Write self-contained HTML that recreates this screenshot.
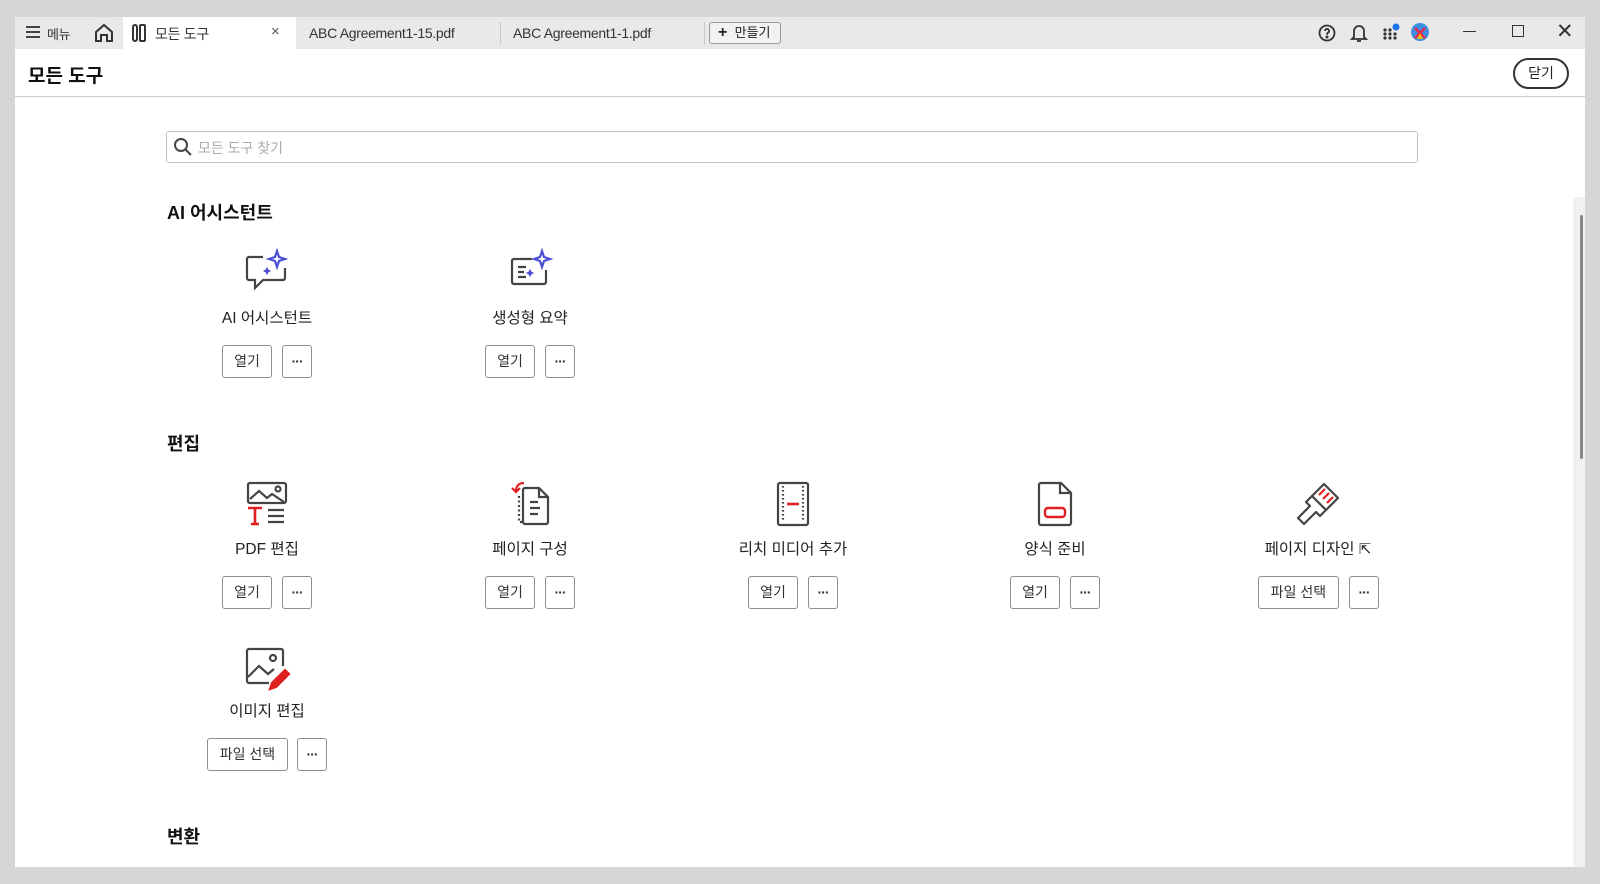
<!DOCTYPE html>
<html><head><meta charset="utf-8"><style>
*{box-sizing:border-box;margin:0;padding:0}
body{width:1600px;height:884px;background:#d6d6d6;font-family:"Liberation Sans","Noto Sans CJK KR",sans-serif;color:#222;position:relative;overflow:hidden}
.win{position:absolute;left:15px;top:17px;width:1570px;height:850px;background:#fff}
.tabbar{position:absolute;left:0;top:0;width:1570px;height:32px;background:#e9e9e9}
.a{position:absolute}
.t{font-size:14px;color:#333;white-space:nowrap;letter-spacing:-0.3px}
.hdr{position:absolute;left:0;top:32px;width:1570px;height:48px;border-bottom:1px solid #ccc;background:#fff}
.btn{position:absolute;height:33px;border:1px solid #8e8e8e;border-radius:3px;background:#fff;font-size:14px;text-align:center;line-height:31px;color:#333}
.lbl{position:absolute;font-size:15.5px;color:#222;white-space:nowrap;transform:translateX(-50%)}
.h{position:absolute;left:152px;font-size:18px;font-weight:bold;color:#111}
.ic{position:absolute;transform:translate(-50%,-50%)}
.d{font-weight:bold;letter-spacing:-1px}
</style></head><body>
<div class="win">
 <div class="tabbar">
  <div class="a" style="left:11px;top:9px;width:14px;height:12px;border-top:2px solid #444;border-bottom:2px solid #444"><div style="margin-top:3px;border-top:2px solid #444"></div></div>
  <div class="a t" style="left:32px;top:7px;font-size:13px">메뉴</div>
  <svg class="a" style="left:79px;top:6px" width="20" height="20" viewBox="0 0 20 20" fill="none" stroke="#333" stroke-width="2"><path d="M2 9L10 2L18 9V18H13V12H7V18H2Z"/></svg>
  <div class="a" style="left:108px;top:0;width:173px;height:32px;background:#fff"></div>
  <svg class="a" style="left:117px;top:7px" width="14" height="18" viewBox="0 0 14 18" fill="none" stroke="#333" stroke-width="2"><rect x="1" y="1" width="4" height="16" rx="2"/><rect x="8" y="1" width="5" height="16" rx="1"/></svg>
  <div class="a t" style="left:140px;top:7px">모든 도구</div>
  <div class="a t" style="left:256px;top:6px;font-size:15px;color:#555">×</div>
  <div class="a t" style="left:294px;top:8px">ABC Agreement1-15.pdf</div>
  <div class="a" style="left:485px;top:5px;width:1px;height:22px;background:#c8c8c8"></div>
  <div class="a t" style="left:498px;top:8px">ABC Agreement1-1.pdf</div>
  <div class="a" style="left:689px;top:5px;width:1px;height:22px;background:#c8c8c8"></div>
  <div class="a" style="left:694px;top:5px;width:72px;height:22px;border:1px solid #999;border-radius:3px;background:#f2f2f2;font-size:13px;line-height:20px;padding-left:8px"><b style="font-size:16px">+</b>&nbsp; 만들기</div>
  <svg class="a" style="left:1302px;top:6px" width="20" height="20" viewBox="0 0 20 20" fill="none" stroke="#333" stroke-width="1.8"><circle cx="10" cy="10" r="7.5"/><path d="M8 8a2 2 0 1 1 3 1.7c-1 .5-1 1-1 2"/><circle cx="10" cy="14" r=".6" fill="#333"/></svg>
  <svg class="a" style="left:1334px;top:5px" width="20" height="22" viewBox="0 0 20 22" fill="none" stroke="#333" stroke-width="1.8"><path d="M5 15V9a5 5 0 0 1 10 0v6l2 2H3z"/><path d="M8 19h4"/></svg>
  <svg class="a" style="left:1366px;top:5px" width="20" height="20" viewBox="0 0 20 20" fill="#333"><circle cx="4" cy="8" r="1.6"/><circle cx="9" cy="8" r="1.6"/><circle cx="4" cy="12" r="1.6"/><circle cx="9" cy="12" r="1.6"/><circle cx="14" cy="12" r="1.6"/><circle cx="4" cy="16" r="1.6"/><circle cx="9" cy="16" r="1.6"/><circle cx="14" cy="16" r="1.6"/><circle cx="15" cy="5" r="3.5" fill="#1a73e8"/></svg>
  <svg class="a" style="left:1395px;top:5px" width="20" height="20" viewBox="0 0 20 20"><circle cx="10" cy="10" r="9" fill="#3f8fe0"/><path d="M5 6L15 16M15 6L5 16" stroke="#e0284a" stroke-width="2.5"/><path d="M7 17L10 11L13 17Z" fill="#f5c000"/></svg>
  <div class="a" style="left:1448px;top:14px;width:13px;height:1px;background:#333"></div>
  <div class="a" style="left:1497px;top:8px;width:12px;height:12px;border:1.5px solid #333"></div>
  <div class="a t" style="left:1541px;top:2px;font-size:21px;font-weight:300">✕</div>
 </div>
 <div class="hdr">
  <div class="a" style="left:13px;top:12px;font-size:19px;font-weight:bold;color:#111">모든 도구</div>
  <div class="a" style="left:1498px;top:9px;width:56px;height:31px;border:2px solid #333;border-radius:16px;font-size:14px;text-align:center;line-height:27px">닫기</div>
 </div>
 <div class="a" style="left:1558px;top:180px;width:12px;height:670px;background:#f1f1f1"></div>
 <div class="a" style="left:1565px;top:198px;width:3px;height:244px;background:#888;border-radius:2px"></div>
 <div class="a" style="left:151px;top:114px;width:1252px;height:32px;border:1px solid #c2c2c2;border-radius:3px"></div>
 <svg class="a" style="left:158px;top:120px" width="20" height="20" viewBox="0 0 20 20" fill="none" stroke="#444" stroke-width="2"><circle cx="8" cy="8" r="6"/><path d="M12.5 12.5L18 18"/></svg>
 <div class="a" style="left:183px;top:121px;font-size:14px;color:#aaa">모든 도구 찾기</div>
 <div class="h" style="top:182px">AI 어시스턴트</div>
 <div class="h" style="top:413px">편집</div>
 <div class="h" style="top:806px">변환</div>

 <svg class="ic" style="left:252px;top:255px" width="48" height="48" viewBox="0 0 48 48" fill="none" stroke-width="2.2"><path d="M20 9H6a2 2 0 0 0-2 2v19a2 2 0 0 0 2 2h6v8l8-8h20a2 2 0 0 0 2-2V20" stroke="#444"/><path d="M34 3l2 6 6 2-6 2-2 6-2-6-6-2 6-2z" stroke="#4b4fd6"/><path d="M24 20l1 2 2 1-2 1-1 2-1-2-2-1 2-1z" fill="#4b4fd6" stroke="#4b4fd6" stroke-width="1"/></svg>
 <div class="lbl" style="left:252px;top:289px">AI 어시스턴트</div>
 <div class="btn" style="left:207px;top:328px;width:50px">열기</div><div class="btn d" style="left:267px;top:328px;width:30px">···</div>

 <svg class="ic" style="left:515px;top:255px" width="48" height="48" viewBox="0 0 48 48" fill="none" stroke-width="2.2"><path d="M26 11H8a2 2 0 0 0-2 2v21a2 2 0 0 0 2 2h30a2 2 0 0 0 2-2V22" stroke="#444"/><path d="M12 19h8M12 24h6M12 29h8" stroke="#444"/><path d="M36 3l2 6 6 2-6 2-2 6-2-6-6-2 6-2z" stroke="#4b4fd6"/><path d="M24 22l1 2 2 1-2 1-1 2-1-2-2-1 2-1z" fill="#4b4fd6" stroke="#4b4fd6" stroke-width="1"/></svg>
 <div class="lbl" style="left:515px;top:289px">생성형 요약</div>
 <div class="btn" style="left:470px;top:328px;width:50px">열기</div><div class="btn d" style="left:530px;top:328px;width:30px">···</div>

 <svg class="ic" style="left:252px;top:487px" width="48" height="48" viewBox="0 0 48 48" fill="none" stroke-width="2.2"><rect x="5" y="3" width="38" height="20" rx="2" stroke="#444"/><path d="M7 19l9-8 8 7 5-4 12 8" stroke="#444"/><circle cx="35" cy="9" r="2.5" stroke="#444"/><path d="M5 28h14M12 28v16M8 44h8" stroke="#e01f1f" stroke-width="2.6"/><path d="M25 30h16M25 36h16M25 42h16" stroke="#444"/></svg>
 <div class="lbl" style="left:252px;top:520px">PDF 편집</div>
 <div class="btn" style="left:207px;top:559px;width:50px">열기</div><div class="btn d" style="left:267px;top:559px;width:30px">···</div>

 <svg class="ic" style="left:515px;top:487px" width="48" height="48" viewBox="0 0 48 48" fill="none" stroke-width="2.2"><path d="M19 8h14l9 9v25a2 2 0 0 1-2 2H19a2 2 0 0 1-2-2V10a2 2 0 0 1 2-2z" stroke="#444"/><path d="M33 8v9h9M24 22h8M24 28h10M24 34h8" stroke="#444"/><path d="M13 16v26h4" stroke="#444" stroke-dasharray="2 2.5"/><path d="M18 3c-5 0-8 3-8 8" stroke="#e01f1f"/><path d="M6 8l4 4 4-4" stroke="#e01f1f"/></svg>
 <div class="lbl" style="left:515px;top:520px">페이지 구성</div>
 <div class="btn" style="left:470px;top:559px;width:50px">열기</div><div class="btn d" style="left:530px;top:559px;width:30px">···</div>

 <svg class="ic" style="left:778px;top:487px" width="48" height="48" viewBox="0 0 48 48" fill="none" stroke-width="2.2"><rect x="9" y="3" width="30" height="42" rx="2" stroke="#444"/><path d="M14 6v36M34 6v36" stroke="#444" stroke-dasharray="1.6 2.4"/><path d="M18 24h12" stroke="#e01f1f" stroke-width="2.6"/></svg>
 <div class="lbl" style="left:778px;top:520px">리치 미디어 추가</div>
 <div class="btn" style="left:733px;top:559px;width:50px">열기</div><div class="btn d" style="left:793px;top:559px;width:30px">···</div>

 <svg class="ic" style="left:1040px;top:487px" width="48" height="48" viewBox="0 0 48 48" fill="none" stroke-width="2.2"><path d="M10 3h20l10 10v30a2 2 0 0 1-2 2H10a2 2 0 0 1-2-2V5a2 2 0 0 1 2-2z" stroke="#444"/><path d="M29 3v10h11" stroke="#444"/><rect x="14" y="28" width="20" height="9" rx="3" stroke="#e01f1f" stroke-width="2.4"/></svg>
 <div class="lbl" style="left:1040px;top:520px">양식 준비</div>
 <div class="btn" style="left:995px;top:559px;width:50px">열기</div><div class="btn d" style="left:1055px;top:559px;width:30px">···</div>

 <svg class="ic" style="left:1303px;top:487px" width="48" height="48" viewBox="0 0 48 48" fill="none" stroke-width="2.2" stroke-linejoin="round"><path d="M30 4l14 14-12 12-14-14z" stroke="#444"/><path d="M18 16l-6 6 4 4-12 12 6 6 12-12 4 4 6-6" stroke="#444"/><path d="M31 9l-6 6M35 13l-6 6M39 17l-6 6" stroke="#e01f1f"/></svg>
 <div class="lbl" style="left:1303px;top:520px">페이지 디자인 <span style="font-size:15px">⇱</span></div>
 <div class="btn" style="left:1243px;top:559px;width:81px">파일 선택</div><div class="btn d" style="left:1334px;top:559px;width:30px">···</div>

 <svg class="ic" style="left:252px;top:651px" width="48" height="48" viewBox="0 0 48 48" fill="none" stroke-width="2.2"><path d="M40 22V7a2 2 0 0 0-2-2H6a2 2 0 0 0-2 2v30a2 2 0 0 0 2 2h20" stroke="#444"/><path d="M5 33l11-11 9 8 6-5" stroke="#444"/><circle cx="30" cy="14" r="3" stroke="#444"/><path d="M42 26l4 4-13 13-6 2 2-6z" stroke="#e01f1f" fill="#e01f1f"/></svg>
 <div class="lbl" style="left:252px;top:682px">이미지 편집</div>
 <div class="btn" style="left:192px;top:721px;width:81px">파일 선택</div><div class="btn d" style="left:282px;top:721px;width:30px">···</div>
</div>
</body></html>
